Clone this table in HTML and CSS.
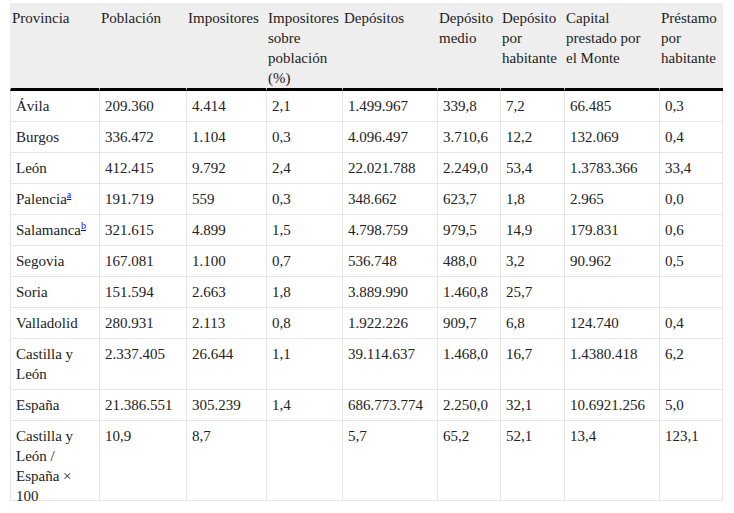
FILE: index.html
```html
<!DOCTYPE html>
<html lang="es">
<head>
<meta charset="utf-8">
<title>Tabla</title>
<link rel="stylesheet" href="styles.css">
</head>
<body>
<table class="data">
  <colgroup>
    <col class="c1"><col class="c2"><col class="c3"><col class="c4"><col class="c5"><col class="c6"><col class="c7"><col class="c8"><col class="c9">
  </colgroup>
  <thead>
    <tr>
      <th>Provincia</th>
      <th>Población</th>
      <th>Impositores</th>
      <th>Impositores sobre población (%)</th>
      <th>Depósitos</th>
      <th>Depósito medio</th>
      <th>Depósito por habitante</th>
      <th>Capital prestado por el&nbsp;Monte</th>
      <th>Préstamo por habitante</th>
    </tr>
  </thead>
  <tbody>
    <tr><td>Ávila</td><td>209.360</td><td>4.414</td><td>2,1</td><td>1.499.967</td><td>339,8</td><td>7,2</td><td>66.485</td><td>0,3</td></tr>
    <tr><td>Burgos</td><td>336.472</td><td>1.104</td><td>0,3</td><td>4.096.497</td><td>3.710,6</td><td>12,2</td><td>132.069</td><td>0,4</td></tr>
    <tr><td>León</td><td>412.415</td><td>9.792</td><td>2,4</td><td>22.021.788</td><td>2.249,0</td><td>53,4</td><td>1.3783.366</td><td>33,4</td></tr>
    <tr><td>Palencia<sup><a href="#a">a</a></sup></td><td>191.719</td><td>559</td><td>0,3</td><td>348.662</td><td>623,7</td><td>1,8</td><td>2.965</td><td>0,0</td></tr>
    <tr><td>Salamanca<sup><a href="#b">b</a></sup></td><td>321.615</td><td>4.899</td><td>1,5</td><td>4.798.759</td><td>979,5</td><td>14,9</td><td>179.831</td><td>0,6</td></tr>
    <tr><td>Segovia</td><td>167.081</td><td>1.100</td><td>0,7</td><td>536.748</td><td>488,0</td><td>3,2</td><td>90.962</td><td>0,5</td></tr>
    <tr><td>Soria</td><td>151.594</td><td>2.663</td><td>1,8</td><td>3.889.990</td><td>1.460,8</td><td>25,7</td><td></td><td></td></tr>
    <tr><td>Valladolid</td><td>280.931</td><td>2.113</td><td>0,8</td><td>1.922.226</td><td>909,7</td><td>6,8</td><td>124.740</td><td>0,4</td></tr>
    <tr><td>Castilla y León</td><td>2.337.405</td><td>26.644</td><td>1,1</td><td>39.114.637</td><td>1.468,0</td><td>16,7</td><td>1.4380.418</td><td>6,2</td></tr>
    <tr><td>España</td><td>21.386.551</td><td>305.239</td><td>1,4</td><td>686.773.774</td><td>2.250,0</td><td>32,1</td><td>10.6921.256</td><td>5,0</td></tr>
    <tr class="last">
      <td><div class="cut">Castilla y León / España × 100</div></td>
      <td><div class="cut">10,9</div></td>
      <td><div class="cut">8,7</div></td>
      <td><div class="cut"></div></td>
      <td><div class="cut">5,7</div></td>
      <td><div class="cut">65,2</div></td>
      <td><div class="cut">52,1</div></td>
      <td><div class="cut">13,4</div></td>
      <td><div class="cut">123,1</div></td>
    </tr>
  </tbody>
</table>
</body>
</html>
```

FILE: styles.css
```css
html, body {
  background: #ffffff;
}
body {
  margin: 3px 10px 0 10px;
  font-family: "Liberation Serif", "Times New Roman", serif;
  font-size: 15px;
  line-height: 20px;
  color: #222222;
}
.data {
  width: 713px;
  table-layout: fixed;
  border-collapse: separate;
  border-spacing: 0;
  font-family: "Liberation Serif", "Times New Roman", serif;
  font-size: 15px;
  line-height: 20px;
}
.c1 { width: 89px; }
.c2 { width: 87px; }
.c3 { width: 80px; }
.c4 { width: 76px; }
.c5 { width: 95px; }
.c6 { width: 63px; }
.c7 { width: 64px; }
.c8 { width: 95px; }
.c9 { width: 64px; }

.data th,
.data td {
  font-family: "Liberation Serif", "Times New Roman", serif;
  font-size: 15px;
  line-height: 20px;
  color: #222222;
}
.data th {
  background: #eeeeee;
  font-weight: normal;
  text-align: left;
  vertical-align: top;
  padding: 5px 1px 0 1px;
  border-left: 1px solid #eeeeee;
  border-bottom: 3px solid #000000;
}
.data td {
  text-align: left;
  vertical-align: top;
  padding: 5px 4px 5px 5px;
  border-left: 1px solid #e6e6e6;
  border-bottom: 1px solid #e6e6e6;
}
.data td:last-child {
  border-right: 1px solid #e6e6e6;
}
.data .last td {
  padding-bottom: 0;
}
.cut {
  height: 74px;
}
sup {
  font-size: 10px;
  line-height: 0;
  vertical-align: 6px;
}
sup a {
  color: #0000ee;
  text-decoration: underline;
}
```
